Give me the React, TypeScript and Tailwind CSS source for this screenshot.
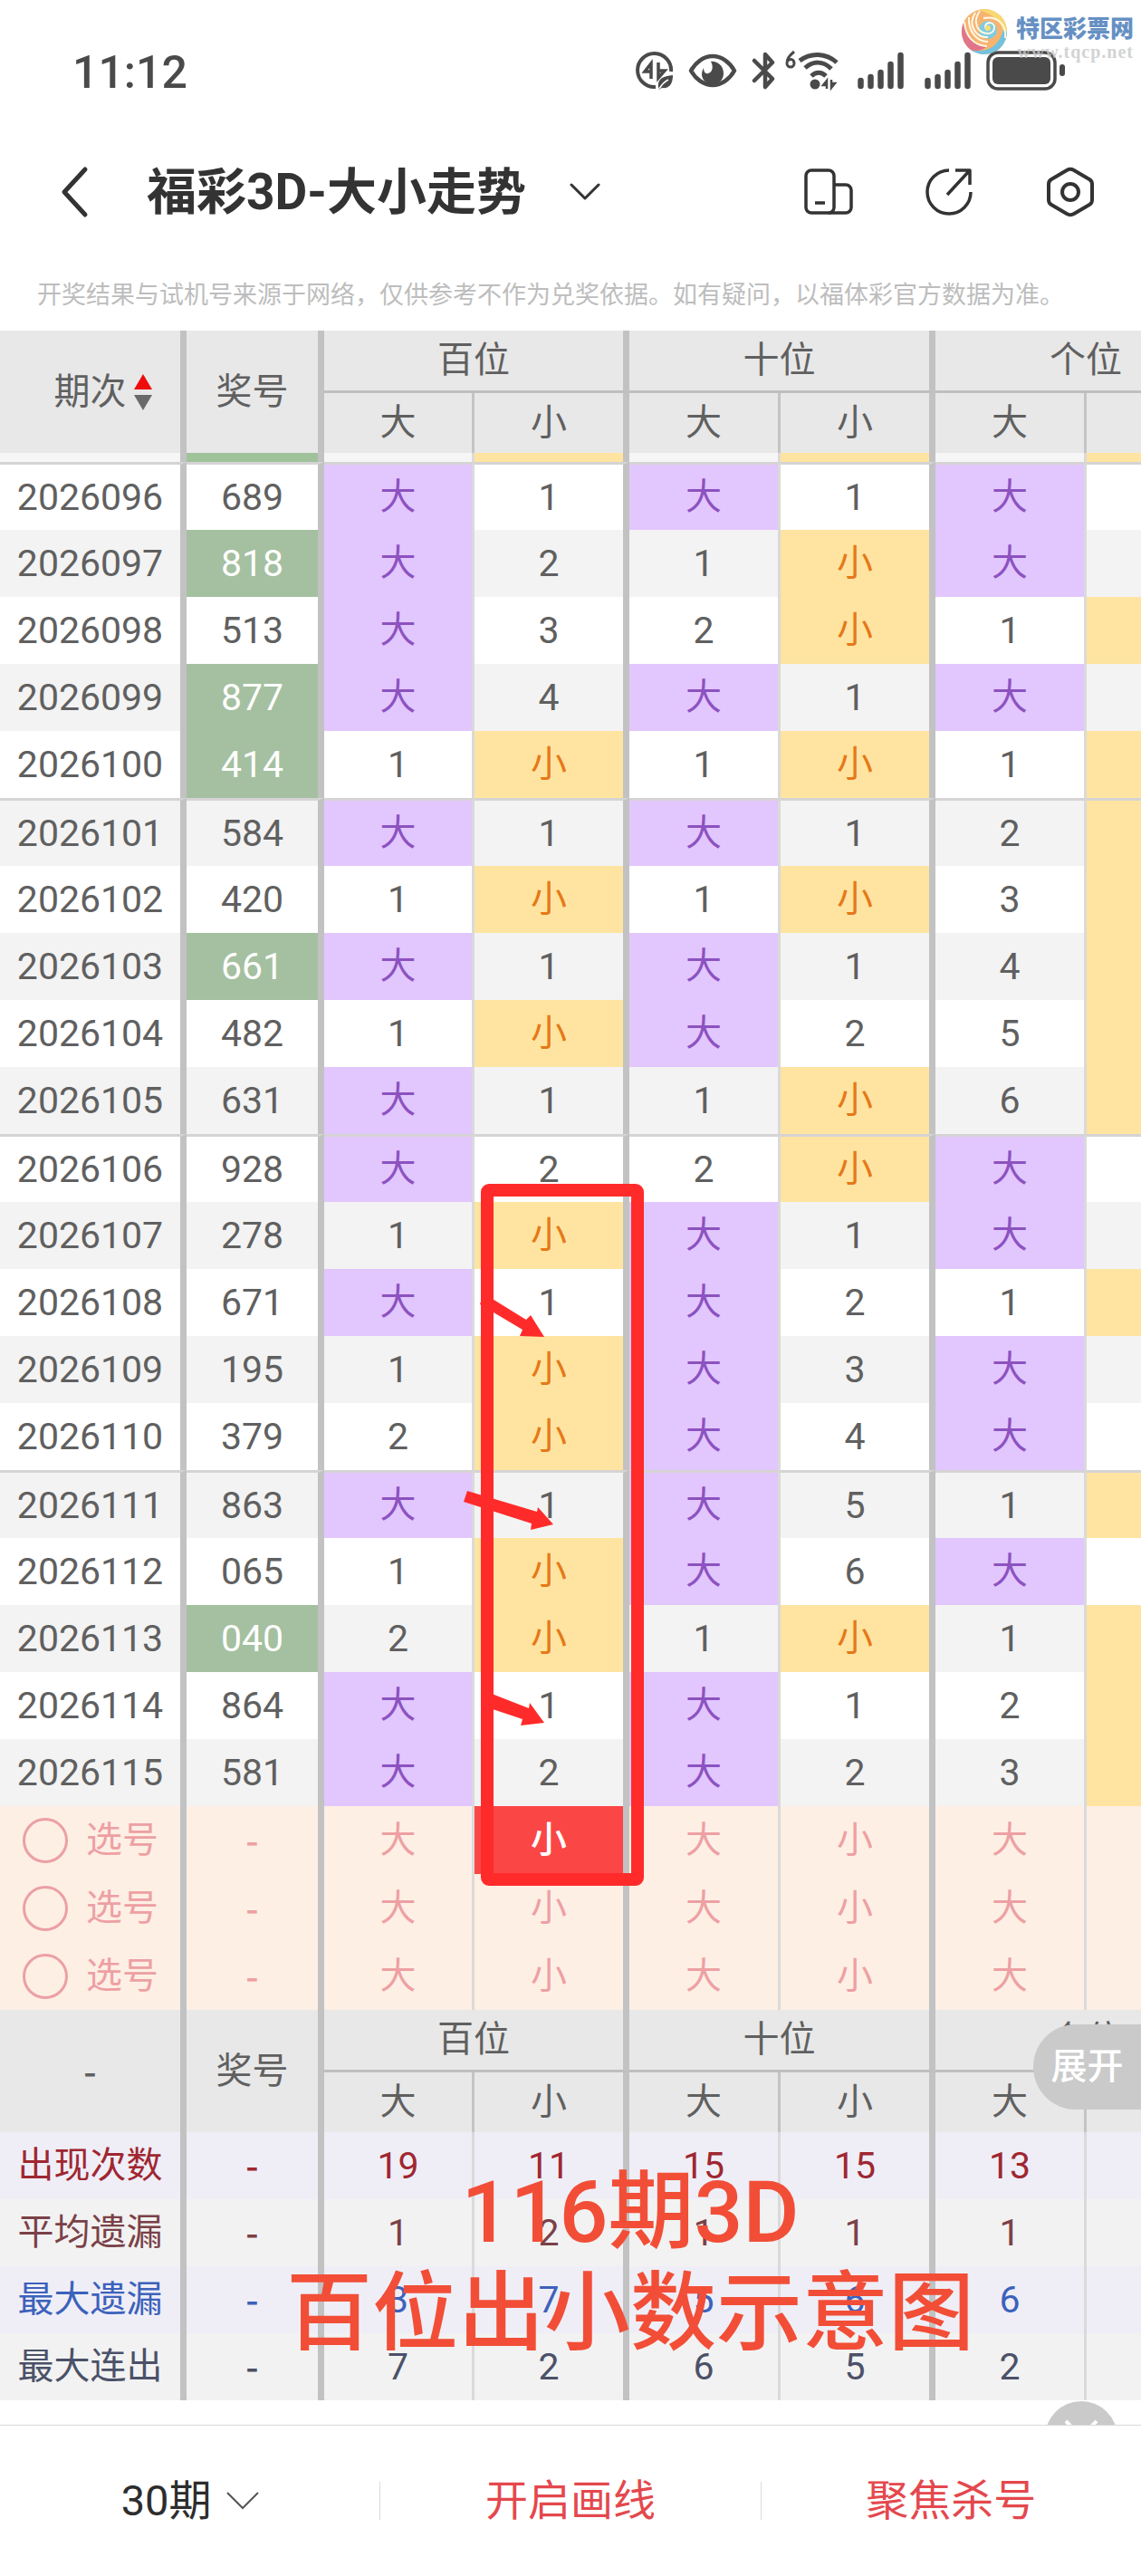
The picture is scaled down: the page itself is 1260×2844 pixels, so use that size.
import React, {useState} from 'react';

type Cell = number | '大' | '小';
type Draw = {
  issue: number;
  code: string;
  hit?: boolean;
  cells: [Cell, Cell, Cell, Cell, Cell];
};

const draws: Draw[] = [
  {issue: 2026096, code: '689', cells: ['大', 1, '大', 1, '大']},
  {issue: 2026097, code: '818', hit: true, cells: ['大', 2, 1, '小', '大']},
  {issue: 2026098, code: '513', cells: ['大', 3, 2, '小', 1]},
  {issue: 2026099, code: '877', hit: true, cells: ['大', 4, '大', 1, '大']},
  {issue: 2026100, code: '414', hit: true, cells: [1, '小', 1, '小', 1]},
  {issue: 2026101, code: '584', cells: ['大', 1, '大', 1, 2]},
  {issue: 2026102, code: '420', cells: [1, '小', 1, '小', 3]},
  {issue: 2026103, code: '661', hit: true, cells: ['大', 1, '大', 1, 4]},
  {issue: 2026104, code: '482', cells: [1, '小', '大', 2, 5]},
  {issue: 2026105, code: '631', cells: ['大', 1, 1, '小', 6]},
  {issue: 2026106, code: '928', cells: ['大', 2, 2, '小', '大']},
  {issue: 2026107, code: '278', cells: [1, '小', '大', 1, '大']},
  {issue: 2026108, code: '671', cells: ['大', 1, '大', 2, 1]},
  {issue: 2026109, code: '195', cells: [1, '小', '大', 3, '大']},
  {issue: 2026110, code: '379', cells: [2, '小', '大', 4, '大']},
  {issue: 2026111, code: '863', cells: ['大', 1, '大', 5, 1]},
  {issue: 2026112, code: '065', cells: [1, '小', '大', 6, '大']},
  {issue: 2026113, code: '040', hit: true, cells: [2, '小', 1, '小', 1]},
  {issue: 2026114, code: '864', cells: ['大', 1, '大', 1, 2]},
  {issue: 2026115, code: '581', cells: ['大', 2, '大', 2, 3]},
];

const stats = [
  {label: '出现次数', values: [19, 11, 15, 15, 13], classname: 'bg-[#efeef7] text-[#9f2731]'},
  {label: '平均遗漏', values: [1, 2, 1, 1, 1], classname: 'bg-[#f2f2f2] text-[#7a4147]'},
  {label: '最大遗漏', values: [3, 7, 5, 6, 6], classname: 'bg-[#efeef7] text-[#3c62bb]'},
  {label: '最大连出', values: [7, 2, 6, 5, 2], classname: 'bg-[#f2f2f2] text-[#4b5168]'},
];

// right hand rule of every column, thick after a whole group
const thick = 'border-r-[7px] border-r-[#c2c2c2]';
const thin = 'border-r-[3px] border-r-[#dadada]';
const thinDark = 'border-r-[3px] border-r-[#c4c4c4]';
const rules = [thin, thick, thin, thick, thin];

const StatusIcons = () => (
  <div className="flex flex-row items-center gap-4 text-[#4a4a4a]">
    <svg width="42" height="44" viewBox="0 0 42 44" fill="none" stroke="currentColor" strokeWidth="4">
      <path d="M22 40A18.500 18.500 0 1 1 39 23" />
      <path d="M17 31V14l-7 9h7M25 13v17l7-8h-7" strokeWidth="3.500" />
      <path d="M25 40c-1-9 5-12 16-13 0 10-4 15-12 14l-3 2z" fill="currentColor" stroke="none" />
      <path d="M26 42c3-5 6-8 10-10" stroke="white" strokeWidth="1.500" />
    </svg>
    <svg width="54" height="44" viewBox="0 0 54 44" fill="none" stroke="currentColor" strokeWidth="4.500">
      <path d="M3 22C8 13 17 6 27 6s19 7 24 16c-5 9-14 16-24 16S8 31 3 22z" strokeLinejoin="round" />
      <path
        d="M25 12c6-1 14 4 14 13 0 7-5 12-12 12S15 32 15 26c0-3 1-5 2-7 0 4 2 7 5 6 5-1 6-8 3-13z"
        fill="currentColor"
        stroke="none"
      />
    </svg>
    <svg
      width="26"
      height="44"
      viewBox="0 0 26 44"
      fill="none"
      stroke="currentColor"
      strokeWidth="4.500"
      strokeLinecap="round"
      strokeLinejoin="round">
      <path d="M3 11l20 20-8 9V4l8 9L3 33" />
    </svg>
    <svg width="59" height="44" viewBox="0 0 59 44" className="overflow-visible" fill="none" stroke="currentColor">
      <path d="M5 1C-1 6-3 9-3 14a4 4 0 1 0 8 0c0-5-5-6-8-2" strokeWidth="3" />
      <path d="M11 11c12-9 29-9 41 2M17 19c9-8 20-8 29 1M24 28c5-5 11-5 16 0" strokeWidth="5" />
      <circle cx="28" cy="37" r="5.500" fill="currentColor" stroke="none" />
      <path d="M41 42v-9l-4 5h4M46 32v9l4-5h-4" strokeWidth="2.500" />
    </svg>
    {[58, 52].map(width => (
      <svg
        key={width}
        width={width}
        height="44"
        viewBox={`0 0 ${width} 44`}
        stroke="currentColor"
        strokeWidth="6.500"
        strokeLinecap="round">
        <path d="M3.500 33v6M14.500 29v10M25.500 24v15M36.500 15v24M47.500 5v34" />
      </svg>
    ))}
    <svg width="88" height="44" viewBox="0 0 88 44">
      <rect x="2" y="2" width="74" height="40" rx="11" fill="none" stroke="currentColor" strokeWidth="3.500" />
      <rect x="7" y="7" width="64" height="30" rx="6" fill="currentColor" />
      <rect x="81" y="15" width="6" height="13" rx="3" fill="currentColor" />
    </svg>
  </div>
);

const Watermark = () => (
  <div className="absolute top-2 right-2 flex flex-row items-start gap-2 opacity-80">
    <svg width="54" height="54" viewBox="0 0 54 54" fill="none">
      <circle cx="27" cy="27" r="25" fill="#f4a24c" />
      <path d="M27 2a25 25 0 0 1 25 25c0 4-1 8-3 11C50 20 40 8 20 3z" fill="#f6cf4e" />
      <path d="M52 27a25 25 0 0 1-40 20c17 4 31-3 36-22z" fill="#4fb3d9" />
      <path d="M12 47A25 25 0 0 1 5 15c0 15 8 26 24 29-5 4-11 5-17 3z" fill="#d9536a" />
      <circle cx="31" cy="25" r="10" fill="#5fc0dc" />
      <path
        d="M5 16c1 16 10 26 25 27M10 11c-1 15 8 27 21 27M17 6C8 20 18 34 31 33M22 4c-9 13-2 25 9 25 8 0 10-11 2-12-5 0-7 6-2 8M50 34c2-14-8-25-24-22"
        stroke="#fff6e0"
        strokeWidth="2"
      />
      <circle cx="31" cy="23" r="3" fill="#f5d64e" />
    </svg>
    <div className="flex flex-col pt-2">
      <span className="text-[26px] leading-[32px] font-black text-[#3f75b5]">特区彩票网</span>
      <span className="text-right font-['Liberation_Serif',serif] text-[20px] leading-[18px] font-bold tracking-wider text-[#c9c9c9]">
        www.tqcp.net
      </span>
    </div>
  </div>
);

const NavBar = () => (
  <nav className="flex h-[112px] flex-row items-center justify-between pr-[52px] pl-[66px]">
    <div className="flex flex-row items-center">
      <button aria-label="返回">
        <svg width="32" height="58" viewBox="0 0 32 58" fill="none" stroke="#333" strokeWidth="5" strokeLinecap="round" strokeLinejoin="round">
          <path d="M28 4L5 29l23 25" />
        </svg>
      </button>
      <h1 className="ml-16 text-[55px] leading-[64px] font-bold text-[#333]">福彩3D-大小走势</h1>
      <button aria-label="切换走势" className="ml-12">
        <svg width="34" height="20" viewBox="0 0 34 20" fill="none" stroke="#333" strokeWidth="3" strokeLinecap="round" strokeLinejoin="round">
          <path d="M2 2l15 15L32 2" />
        </svg>
      </button>
    </div>
    <div className="flex flex-row items-center gap-20">
      <button aria-label="横竖屏">
        <svg width="54" height="56" viewBox="0 0 54 56" fill="none" stroke="#333" strokeWidth="3.500">
          <rect x="2" y="4" width="31" height="47" rx="6" />
          <path d="M33 20h13a6 6 0 0 1 6 6v19a6 6 0 0 1-6 6H27M12 40h11" />
        </svg>
      </button>
      <button aria-label="分享">
        <svg width="54" height="56" viewBox="0 0 54 56" fill="none" stroke="#333" strokeWidth="3.500">
          <path d="M26 4a24 24 0 1 0 24 24M33 4h16v16M24 31L48 5" strokeLinejoin="round" />
        </svg>
      </button>
      <button aria-label="设置">
        <svg width="52" height="56" viewBox="0 0 52 56" fill="none" stroke="#333" strokeWidth="4">
          <path d="M22 4a8 8 0 0 1 8 0l17 10a6 6 0 0 1 3 5v18a6 6 0 0 1-3 5L30 52a8 8 0 0 1-8 0L5 42a6 6 0 0 1-3-5V19a6 6 0 0 1 3-5z" />
          <circle cx="26" cy="28" r="9" />
        </svg>
      </button>
    </div>
  </nav>
);

const Dash = () => <span className="font-['Noto_Sans_CJK_SC',sans-serif] font-medium">-</span>;

const HeadRows = ({first}: {first: React.ReactNode}) => (
  <>
    <tr className="h-[69px]">
      <th rowSpan={2} className={`font-normal ${thick}`}>
        {first}
      </th>
      <th rowSpan={2} className={`font-normal ${thick}`}>
        奖号
      </th>
      <th colSpan={2} className={`border-b-[3px] border-b-[#bfbfbf] font-normal ${thick}`}>
        百位
      </th>
      <th colSpan={2} className={`border-b-[3px] border-b-[#bfbfbf] font-normal ${thick}`}>
        十位
      </th>
      <th colSpan={2} className="border-b-[3px] border-b-[#bfbfbf] font-normal">
        个位
      </th>
    </tr>
    <tr className="h-[66px]">
      <th className={`font-normal ${thinDark}`}>大</th>
      <th className={`font-normal ${thick}`}>小</th>
      <th className={`font-normal ${thinDark}`}>大</th>
      <th className={`font-normal ${thick}`}>小</th>
      <th className={`font-normal ${thinDark}`}>大</th>
      <th></th>
    </tr>
  </>
);

const cellColor = (cell: Cell) => {
  if (cell === '大') return 'bg-[#e2c6fe] text-[#8c52c0]';
  if (cell === '小') return 'bg-[#fee4a0] text-[#e67817]';
  return 'text-[41px]';
};

const DrawRow = ({draw, index}: {draw: Draw; index: number}) => {
  const groupStart = index % 5 == 0;
  const line = groupStart ? 'border-t-[3px] border-t-[#d6d3d4]' : '';
  return (
    <tr className={`${groupStart ? 'h-[75px]' : 'h-[74px]'} ${index % 2 ? 'bg-[#f3f3f3]' : 'bg-white'}`}>
      <td className={`text-[41px] ${thick} ${line}`}>{draw.issue}</td>
      <td className={`text-[41px] ${thick} ${line} ${draw.hit ? 'bg-[#a4c0a0] text-white' : ''}`}>{draw.code}</td>
      {draw.cells.map((cell, i) => (
        <td key={i} className={`${rules[i]} ${line} ${cellColor(cell)}`}>
          {cell}
        </td>
      ))}
      <td className={`${line} ${draw.cells[4] === '大' ? '' : 'bg-[#fee4a0]'}`}></td>
    </tr>
  );
};

const Marks = () => (
  <svg
    className="pointer-events-none absolute top-[935px] left-[500px]"
    width="220"
    height="790"
    viewBox="0 0 220 790"
    fill="#ff2b2b">
    <rect x="38" y="14" width="166" height="761" rx="2" fill="none" stroke="#ff2b2b" strokeWidth="14" strokeLinejoin="round" />
    <path d="M34 128l47 29 5-5 15 24-27-1 3-7-47-28z" />
    <path d="M16 346l77 23 1-5 17 19-25 6 1-7-75-24z" />
    <path d="M38 568l46 18 1-6 16 22-26 3 2-7-39-13z" />
  </svg>
);

export default function App() {
  const [periods, setPeriods] = useState('30');

  return (
    <div className="min-h-screen w-full overflow-hidden bg-white font-[Roboto,'Noto_Sans_CJK_SC',sans-serif]">
      <header className="relative flex h-[156px] flex-row items-center justify-between pr-[83px] pl-20">
        <span className="pt-1 text-[50px] font-medium text-[#4a4a4a]">11:12</span>
        <StatusIcons />
        <Watermark />
      </header>
      <NavBar />
      <p className="pt-[38px] pb-[19px] pl-[41px] text-[27px] leading-10 whitespace-nowrap text-[#bdbdbd]">
        开奖结果与试机号来源于网络，仅供参考不作为兑奖依据。如有疑问，以福体彩官方数据为准。
      </p>

      <main className="relative overflow-hidden pb-[27px]">
        <table className="w-[108%] min-w-[1365px] table-fixed border-separate border-spacing-0 text-center text-[40px] leading-[48px] text-[#606060] [&_td]:p-0 [&_th]:p-0">
          <colgroup>
            <col className="w-[206px]" />
            <col className="w-[152px]" />
            <col className="w-[166px]" />
            <col className="w-[171px]" />
            <col className="w-[167px]" />
            <col className="w-[171px]" />
            <col className="w-[167px]" />
            <col className="w-[165px]" />
          </colgroup>
          <thead className="bg-[#e8e8e8]">
            <HeadRows
              first={
                <button className="inline-flex flex-row items-center gap-2 pl-7">
                  期次
                  <svg width="20" height="40" viewBox="0 0 20 40">
                    <path d="M10 0l10 17H0z" fill="#ee0c0c" />
                    <path d="M10 40l10-17H0z" fill="#6a6a6a" />
                  </svg>
                </button>
              }
            />
          </thead>
          <tbody>
            {/* tail of the row scrolled under the header */}
            <tr className="h-[10px] bg-[#f6f6f6]">
              <td className={thick}></td>
              <td className={`bg-[#a0c29b] ${thick}`}></td>
              <td className={thin}></td>
              <td className={`bg-[#fee4a0] ${thick}`}></td>
              <td className={thin}></td>
              <td className={`bg-[#fee4a0] ${thick}`}></td>
              <td className={thin}></td>
              <td className="bg-[#fee4a0]"></td>
            </tr>
            {draws.map((draw, index) => (
              <DrawRow key={draw.issue} draw={draw} index={index} />
            ))}
            {[0, 1, 2].map(row => (
              <tr key={row} className="h-[75px] bg-[#feefe5] text-[#eda0a3]">
                <td className={thick}>
                  <label className="flex flex-row items-center gap-5 pl-[25px]">
                    <input
                      type="checkbox"
                      className="h-[50px] w-[50px] appearance-none rounded-full border-[3px] border-[#eba0a4]"
                    />
                    选号
                  </label>
                </td>
                <td className={thick}>
                  <Dash />
                </td>
                {rules.map((rule, i) => (
                  <td
                    key={i}
                    className={`${rule} ${row == 0 && i == 1 ? 'bg-[#fb4646] font-medium text-white' : ''}`}>
                    {i % 2 ? '小' : '大'}
                  </td>
                ))}
                <td></td>
              </tr>
            ))}
          </tbody>
          <tbody className="bg-[#e8e8e8]">
            <HeadRows first={<Dash />} />
          </tbody>
          <tbody>
            {stats.map(item => (
              <tr key={item.label} className={`h-[74px] ${item.classname}`}>
                <td className={thick}>{item.label}</td>
                <td className={thick}>
                  <Dash />
                </td>
                {item.values.map((value, i) => (
                  <td key={i} className={`text-[41px] ${rules[i]}`}>
                    {value}
                  </td>
                ))}
                <td></td>
              </tr>
            ))}
          </tbody>
        </table>

        <Marks />
        <p className="absolute bottom-[66px] left-[314px] w-[764px] text-center text-[95px] leading-[112px] font-medium whitespace-nowrap text-[#f24e37]">
          116期3D
          <br />
          百位出小数示意图
        </p>
        <button className="absolute right-0 bottom-[348px] h-[94px] w-[119px] rounded-l-full bg-[#cacaca] text-[40px] font-medium text-white">
          展开
        </button>
        <button
          aria-label="收起"
          className="absolute right-[26px] -bottom-[54px] flex h-20 w-20 justify-center rounded-full bg-[#cacaca] pt-5">
          <svg width="38" height="22" viewBox="0 0 38 22" fill="none" stroke="white" strokeWidth="4">
            <path d="M2 2l17 17L36 2" />
          </svg>
        </button>
      </main>

      <footer className="flex h-[167px] flex-row items-center border-t border-[#d8d8d8] text-[47px]">
        <label className="flex flex-1 flex-row items-center justify-center gap-4 text-[#2d2d2d]">
          <select
            aria-label="期数"
            value={periods}
            onChange={e => setPeriods(e.target.value)}
            className="appearance-none bg-transparent">
            <option value="30">30期</option>
            <option value="50">50期</option>
          </select>
          <svg width="36" height="20" viewBox="0 0 36 20" fill="none" stroke="#555" strokeWidth="2">
            <path d="M1 1l17 17L35 1" />
          </svg>
        </label>
        <div className="h-[42px] w-px bg-[#dcdcdc]"></div>
        <button className="flex-1 text-[#e4484d]">开启画线</button>
        <div className="h-[42px] w-px bg-[#dcdcdc]"></div>
        <button className="flex-1 text-[#e4484d]">聚焦杀号</button>
      </footer>
    </div>
  );
}
